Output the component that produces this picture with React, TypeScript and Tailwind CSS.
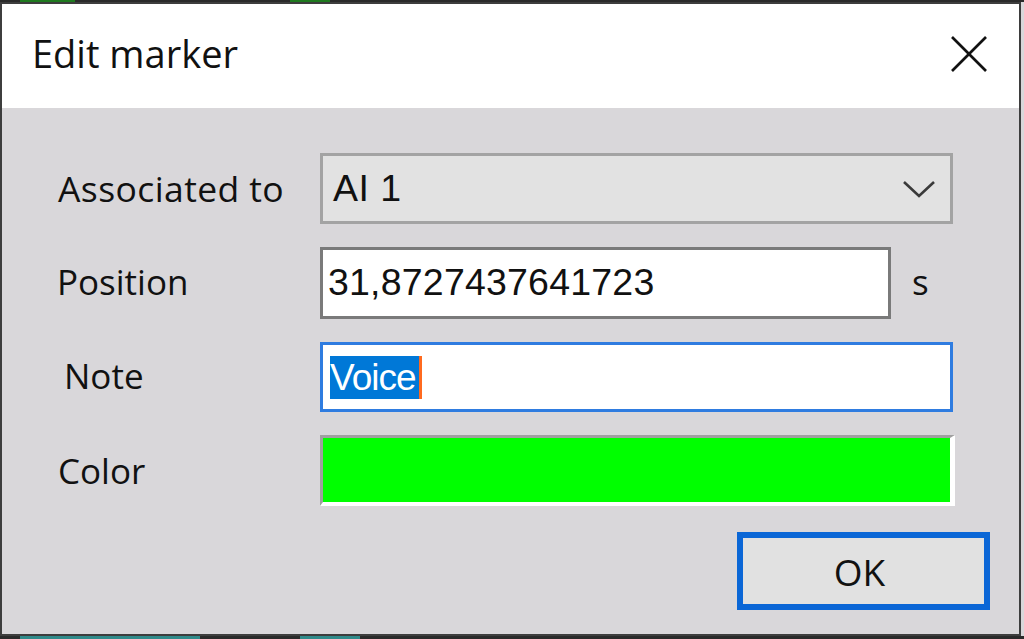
import React from "react";

const labelFont = { fontFamily: '"Open Sans", "Noto Sans", sans-serif' };
const editFont = { fontFamily: '"Liberation Sans", Arial, sans-serif' };

function Chevron() {
  return (
    <svg width="34" height="20" viewBox="0 0 34 20" className="shrink-0">
      <polyline points="2,3 17,17 32,3" fill="none" stroke="#3a3a3a" strokeWidth="2.6" />
    </svg>
  );
}

function CloseX() {
  return (
    <svg width="38" height="38" viewBox="0 0 38 38">
      <line x1="2" y1="2" x2="36" y2="36" stroke="#111" strokeWidth="2.6" />
      <line x1="36" y1="2" x2="2" y2="36" stroke="#111" strokeWidth="2.6" />
    </svg>
  );
}

export default function App() {
  return (
    <div className="w-[1024px] h-[639px] overflow-hidden bg-[#2a2a2a] flex flex-col">
      <div className="h-[2px] flex shrink-0">
        <div className="w-[20px] bg-[#2a2a2a]" />
        <div className="w-[55px] bg-[#1f7a1f]" />
        <div className="w-[215px] bg-[#2a2a2a]" />
        <div className="w-[40px] bg-[#1f7a1f]" />
        <div className="flex-1 bg-[#2a2a2a]" />
      </div>
      <div className="flex h-[634px] shrink-0">
        <div className="w-[1021px] h-[634px] border-[2px] border-[#3d3d3d] flex flex-col shrink-0">
          {/* Title bar */}
          <div className="h-[104px] bg-white flex items-center justify-between pl-[30px] pr-[31px] shrink-0">
            <span className="text-[38px] text-[#111] leading-none mt-[-6px]" style={labelFont}>
              Edit marker
            </span>
            <div className="mt-[-4px]">
              <CloseX />
            </div>
          </div>
          {/* Client */}
          <div className="flex-1 bg-[#d9d7da] flex flex-col pl-[56px] pt-[45px]">
            {/* Associated to */}
            <div className="flex items-center h-[71px]">
              <div className="w-[262px] text-[35.5px] text-[#111] leading-none tracking-[0.4px]" style={labelFont}>
                Associated to
              </div>
              <div className="w-[633px] h-[71px] border-[3px] border-[#a3a3a3] bg-[#e2e2e2] flex items-center justify-between pl-[10px] pr-[14px]">
                <span className="text-[37.5px] text-[#111] leading-none tracking-[0.5px]" style={editFont}>
                  AI 1
                </span>
                <Chevron />
              </div>
            </div>
            {/* Position */}
            <div className="flex items-center h-[72px] mt-[23px]">
              <div className="w-[262px] text-[35px] text-[#111] leading-none mt-[-3px] ml-[-1px]" style={labelFont}>
                Position
              </div>
              <div className="w-[571px] h-[72px] border-[3px] border-[#7a7a7a] bg-white flex items-center pl-[5px] ml-[1px]">
                <span className="text-[37.5px] text-[#111] leading-none tracking-[0.2px]" style={editFont}>
                  31,8727437641723
                </span>
              </div>
              <span className="ml-[21px] text-[35px] text-[#111] leading-none mt-[-4px]" style={labelFont}>
                s
              </span>
            </div>
            {/* Note */}
            <div className="flex items-center h-[70px] mt-[23px]">
              <div className="w-[262px] pl-[6px] text-[35px] text-[#111] leading-none mt-[-3px]" style={labelFont}>
                Note
              </div>
              <div className="w-[633px] h-[70px] border-[3px] border-[#2f7ce0] bg-white flex items-center pl-[7px]">
                <div className="h-[43px] bg-[#0078d7] flex items-center pr-[3px]">
                  <span className="text-[37px] text-white leading-none tracking-[-1px]" style={editFont}>
                    Voice
                  </span>
                </div>
                <div className="h-[43px] w-[3px] bg-[#ff6a1f]" />
              </div>
            </div>
            {/* Color */}
            <div className="flex items-center h-[71px] mt-[23px]">
              <div className="w-[262px] text-[35px] text-[#111] leading-none" style={labelFont}>
                Color
              </div>
              <div className="w-[635px] h-[71px] border-t-[3px] border-l-[3px] border-b-[4px] border-r-[5px] border-t-[#a0a0a0] border-l-[#a0a0a0] border-b-white border-r-white bg-[#00ff00]" />
            </div>
            {/* OK */}
            <div className="flex justify-end pr-[29px] mt-[26px]">
              <div className="w-[253px] h-[78px] border-[6px] border-[#0a66d6] bg-[#e1e1e1] flex items-center justify-center pr-[8px]">
                <span className="text-[37px] text-[#111] leading-none" style={labelFont}>
                  OK
                </span>
              </div>
            </div>
          </div>
        </div>
        <div className="flex-1 bg-[#d9d7da]" />
      </div>
      <div className="flex-1 flex">
        <div className="w-[20px] bg-[#2a2a2a]" />
        <div className="w-[180px] bg-[#2f8a8a]" />
        <div className="w-[100px] bg-[#2a2a2a]" />
        <div className="w-[60px] bg-[#2f8a8a]" />
        <div className="flex-1 bg-[#2a2a2a]" />
      </div>
    </div>
  );
}
